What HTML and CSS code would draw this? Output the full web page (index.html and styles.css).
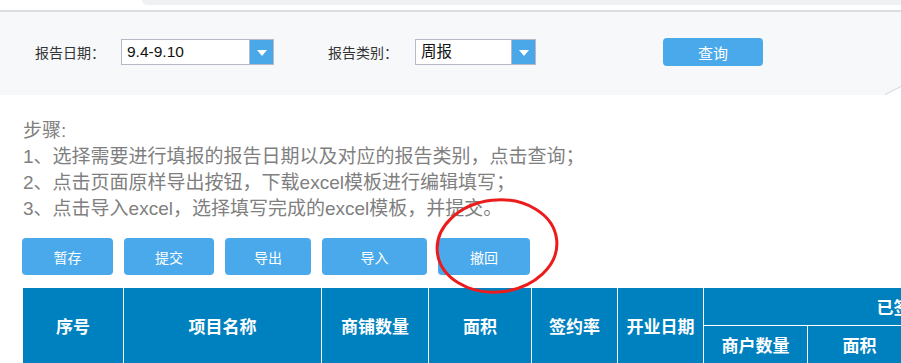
FILE: index.html
```html
<!DOCTYPE html>
<html lang="zh-CN">
<head>
    <meta charset="UTF-8">
    <meta name="viewport" content="width=device-width, initial-scale=1.0">
    <title>报告填报</title>
    <link rel="stylesheet" href="styles.css">
</head>
<body>
    <div class="page">
        <div class="top-strip">
            <div class="tab"></div>
        </div>

        <div class="toolbar">
            <span class="field-label">报告日期：</span>
            <div class="select select-date">
                <span class="select-text">9.4-9.10</span>
                <span class="select-arrow"></span>
            </div>
            <span class="field-label label-type">报告类别：</span>
            <div class="select select-type">
                <span class="select-text">周报</span>
                <span class="select-arrow"></span>
            </div>
            <button class="query-btn">查询</button>
            <!-- page fold in the corner -->
            <svg class="fold" width="16" height="9" viewBox="0 0 16 9">
                <polygon points="0,9 16,1 16,9" fill="#ffffff"/>
                <line x1="0" y1="8.5" x2="16" y2="0.5" stroke="#d4d6da" stroke-width="1"/>
            </svg>
        </div>

        <div class="steps">
            <p>步骤:</p>
            <p>1、选择需要进行填报的报告日期以及对应的报告类别，点击查询；</p>
            <p>2、点击页面原样导出按钮，下载excel模板进行编辑填写；</p>
            <p>3、点击导入excel，选择填写完成的excel模板，并提交。</p>
        </div>

        <div class="actions">
            <button class="btn btn-save">暂存</button>
            <button class="btn btn-submit">提交</button>
            <button class="btn btn-export">导出</button>
            <button class="btn btn-import">导入</button>
            <button class="btn btn-revoke">撤回</button>
        </div>

        <div class="table-wrap">
            <table>
                <colgroup>
                    <col class="c-no">
                    <col class="c-name">
                    <col class="c-shops">
                    <col class="c-area">
                    <col class="c-rate">
                    <col class="c-date">
                    <col class="c-sub">
                    <col class="c-sub">
                    <col class="c-sub">
                    <col class="c-sub-last">
                </colgroup>
                <thead>
                    <tr>
                        <th rowspan="2">序号</th>
                        <th rowspan="2">项目名称</th>
                        <th rowspan="2">商铺数量</th>
                        <th rowspan="2">面积</th>
                        <th rowspan="2">签约率</th>
                        <th rowspan="2">开业日期</th>
                        <th colspan="4">已签约情况</th>
                    </tr>
                    <tr>
                        <th>商户数量</th>
                        <th>面积</th>
                        <th>签约率</th>
                        <th>租金</th>
                    </tr>
                </thead>
            </table>
        </div>

        <!-- hand-drawn mark around the revoke button -->
        <svg class="mark" width="130" height="104" viewBox="0 0 130 104">
            <ellipse cx="65" cy="52" rx="60" ry="46" fill="none" stroke="#ec1c1c" stroke-width="3" transform="rotate(-6 65 52)"/>
        </svg>
    </div>
</body>
</html>
```

FILE: styles.css
```css
html, body {
    margin: 0;
    padding: 0;
    background: #ffffff;
    overflow: hidden;
}
body {
    font-family: "Liberation Sans", "Noto Sans CJK SC", sans-serif;
}
.page {
    position: relative;
    width: 901px;
    height: 363px;
    overflow: hidden;
}
.top-strip {
    height: 10px;
    background: #ffffff;
    display: flex;
    justify-content: flex-end;
}
.tab {
    width: 759px;
    height: 5px;
    background: #f0f1f3;
    border-bottom-left-radius: 7px;
}
.toolbar {
    position: relative;
    height: 85px;
    box-sizing: border-box;
    border-top: 2px solid #dcdddf;
    background: #f7f8fa;
    display: flex;
    align-items: center;
    padding: 0 0 3px 35px;
}
.field-label {
    width: 86px;
    font-size: 14px;
    color: #333333;
}
.label-type {
    width: 87px;
    margin-left: 54px;
}
.select {
    display: flex;
    height: 26px;
    box-sizing: border-box;
    border: 1px solid #b6bac8;
    background: #ffffff;
}
.select-date {
    width: 153px;
}
.select-type {
    width: 121px;
}
.select-text {
    flex: 1;
    padding-left: 5px;
    font-size: 15.5px;
    line-height: 24px;
    color: #111111;
}
.select-arrow {
    width: 23px;
    background: #4aa8e8;
    border-left: 1px solid #b6bac8;
    display: flex;
    align-items: center;
    justify-content: center;
}
.select-arrow::after {
    content: "";
    border-left: 5px solid transparent;
    border-right: 5px solid transparent;
    border-top: 6px solid #ffffff;
    margin-top: 2px;
}
.query-btn {
    margin-left: 127px;
    width: 100px;
    height: 28px;
    border: none;
    border-radius: 4px;
    background: #4aa9ea;
    color: #ffffff;
    font-family: inherit;
    font-size: 15px;
    padding: 0;
}
.fold {
    position: absolute;
    right: 0;
    bottom: 0;
}
.steps {
    padding: 23px 0 0 23px;
    color: #7f7f7f;
    font-size: 19px;
    line-height: 26px;
}
.steps p {
    margin: 0;
}
.actions {
    display: flex;
    gap: 11px;
    padding: 16px 0 0 22px;
}
.btn {
    height: 37px;
    border: none;
    border-radius: 4px;
    background: #4aa9ea;
    color: #ffffff;
    font-family: inherit;
    font-size: 14px;
    padding: 0;
}
.btn-save { width: 91px; }
.btn-submit { width: 90px; }
.btn-export { width: 86px; }
.btn-import { width: 105px; }
.btn-revoke { width: 92px; }
.table-wrap {
    margin-top: 12px;
    padding-left: 22px;
}
table {
    width: 1112px;
    table-layout: fixed;
    border-collapse: collapse;
}
.c-no { width: 101px; }
.c-name { width: 198px; }
.c-shops { width: 107px; }
.c-area { width: 103px; }
.c-rate { width: 86px; }
.c-date { width: 86px; }
.c-sub { width: 104px; }
.c-sub-last { width: 119px; }
th {
    height: 37px;
    padding: 0;
    border: 1px solid #ffffff;
    background: #0081bf;
    color: #ffffff;
    font-size: 17px;
    font-weight: bold;
    text-align: center;
}
.mark {
    position: absolute;
    left: 432px;
    top: 194px;
}
```
